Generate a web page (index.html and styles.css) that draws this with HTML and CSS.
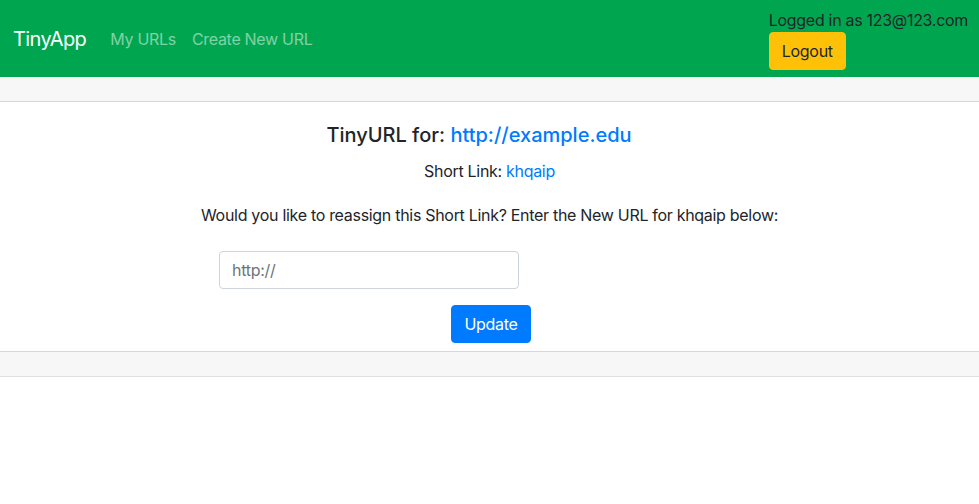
FILE: index.html
```html
<!DOCTYPE html>
<html lang="en">
<head>
<meta charset="utf-8">
<title>TinyApp</title>
<link rel="stylesheet" href="styles.css">
</head>
<body>
<nav class="navbar">
  <a class="brand" href="#">TinyApp</a>
  <div class="nav-links">
    <a class="nav-link" href="#">My URLs</a>
    <a class="nav-link" href="#">Create New URL</a>
  </div>
  <div class="user-box">
    <div class="user-text">Logged in as 123@123.com</div>
    <button class="btn btn-warning">Logout</button>
  </div>
</nav>
<div class="card">
  <div class="card-header"></div>
  <div class="card-body">
    <h5 class="card-title">TinyURL for: <a href="#">http://example.edu</a></h5>
    <p class="short">Short Link: <a href="#">khqaip</a></p>
    <p class="prompt">Would you like to reassign this Short Link? Enter the New URL for khqaip below:</p>
    <form class="edit-form">
      <div class="input-row">
        <input class="form-control" type="text" placeholder="http://">
      </div>
      <div class="button-row">
        <button class="btn btn-primary" type="button">Update</button>
      </div>
    </form>
  </div>
  <div class="card-footer"></div>
</div>
</body>
</html>
```
FILE: styles.css
```css
* { box-sizing: border-box; }
html, body {
  margin: 0;
  padding: 0;
  background: #fff;
  font-family: "Inter", "Liberation Sans", sans-serif;
  font-size: 16px;
  line-height: 1.5;
  letter-spacing: -0.3px;
  color: #212529;
}
a { color: #007bff; text-decoration: none; }

.navbar {
  display: flex;
  align-items: center;
  background: #00a64f;
  padding: 8px 11px 8px 13px;
  height: 77px;
}
.brand {
  color: #fff;
  font-size: 20px;
  line-height: 30px;
  letter-spacing: -0.6px;
  margin-right: 16px;
}
.nav-links { display: flex; }
.nav-link {
  color: rgba(255, 255, 255, 0.5);
  padding: 8px;
}
.user-box {
  margin-left: auto;
  display: flex;
  flex-direction: column;
  align-items: flex-start;
}
.user-text {
  color: #212529;
  line-height: 23px;
  padding-top: 1px;
}
.btn {
  font-family: inherit;
  font-size: 16px;
  line-height: 24px;
  letter-spacing: -0.3px;
  padding: 6px 12px;
  border: 1px solid transparent;
  border-radius: 4px;
  cursor: pointer;
}
.btn-warning {
  background: #ffc107;
  border-color: #ffc107;
  color: #212529;
  margin-bottom: -1px;
}
.btn-primary {
  background: #007bff;
  border-color: #007bff;
  color: #fff;
}

.card {
  background: #fff;
  border-bottom: 1px solid rgba(0, 0, 0, 0.125);
}
.card-header {
  height: 25px;
  background: #f7f7f7;
  border-bottom: 1px solid rgba(0, 0, 0, 0.125);
}
.card-body {
  padding: 21px 20px 8px;
  text-align: center;
}
.card-title {
  margin: 0 0 12px;
  padding-right: 21px;
  font-size: 20px;
  font-weight: 500;
  line-height: 24px;
  letter-spacing: 0;
}
.short { margin: 0 0 20px; }
.prompt { margin: 0 0 24px; }
.input-row {
  width: 541px;
  margin: 0 auto 16px;
  text-align: left;
}
.form-control {
  display: block;
  width: 300px;
  height: 38px;
  padding: 6px 12px;
  font-family: inherit;
  font-size: 16px;
  letter-spacing: -0.3px;
  color: #495057;
  border: 1px solid #ced4da;
  border-radius: 4px;
  background: #fff;
}
.form-control::placeholder { color: #6c757d; }
.button-row {
  display: flex;
  justify-content: center;
  padding-left: 3px;
}
.card-footer {
  height: 25px;
  background: #f7f7f7;
  border-top: 1px solid rgba(0, 0, 0, 0.125);
}
```
